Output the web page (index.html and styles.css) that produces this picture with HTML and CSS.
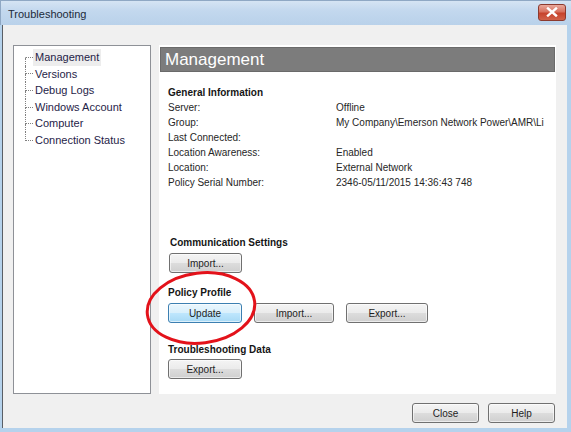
FILE: index.html
```html
<!DOCTYPE html>
<html>
<head>
<meta charset="utf-8">
<link rel="stylesheet" href="styles.css">
</head>
<body>
<div class="window">
  <div class="titlebar">
    <span class="title">Troubleshooting</span>
    <span class="close-x">
      <svg width="12" height="10" viewBox="0 0 12 10"><path d="M2 1.5 L10 8.5 M10 1.5 L2 8.5" stroke="#fff" stroke-width="2.4" stroke-linecap="square"/></svg>
    </span>
  </div>
  <div class="body">
    <div class="panels">
      <div class="tree">
        <ul class="tree-list">
          <li class="first"><span class="branch"><span class="b-top"></span><span class="b-bot"></span></span><span class="label sel">Management</span></li>
          <li><span class="branch"><span class="b-top"></span><span class="b-bot"></span></span><span class="label">Versions</span></li>
          <li><span class="branch"><span class="b-top"></span><span class="b-bot"></span></span><span class="label">Debug Logs</span></li>
          <li><span class="branch"><span class="b-top"></span><span class="b-bot"></span></span><span class="label">Windows Account</span></li>
          <li><span class="branch"><span class="b-top"></span><span class="b-bot"></span></span><span class="label">Computer</span></li>
          <li class="last"><span class="branch"><span class="b-top"></span><span class="b-bot"></span></span><span class="label">Connection Status</span></li>
        </ul>
      </div>
      <div class="content">
        <div class="header">Management</div>
        <div class="inner">
          <div class="section-title">General Information</div>
          <div class="info">
            <span>Server:</span><span>Offline</span>
            <span>Group:</span><span>My Company\Emerson Network Power\AMR\Li</span>
            <span>Last Connected:</span><span></span>
            <span>Location Awareness:</span><span>Enabled</span>
            <span>Location:</span><span>External Network</span>
            <span>Policy Serial Number:</span><span>2346-05/11/2015 14:36:43 748</span>
          </div>
          <div class="section-title comm">Communication Settings</div>
          <div class="btn-row r1"><button class="btn w73">Import...</button></div>
          <div class="section-title pp">Policy Profile</div>
          <div class="btn-row r2">
            <button class="btn hot w74">Update</button>
            <button class="btn w80">Import...</button>
            <button class="btn w82">Export...</button>
          </div>
          <div class="section-title td">Troubleshooting Data</div>
          <div class="btn-row r3"><button class="btn w74">Export...</button></div>
        </div>
      </div>
    </div>
    <div class="footer">
      <button class="btn fbtn">Close</button>
      <button class="btn fbtn">Help</button>
    </div>
  </div>
  <svg class="annot" width="120" height="84" viewBox="0 0 120 84">
    <ellipse cx="60" cy="42" rx="54" ry="35" fill="none" stroke="#e3121a" stroke-width="3" transform="rotate(-7 60 42)"/>
  </svg>
</div>
</body>
</html>
```

FILE: styles.css
```css
* { box-sizing: border-box; }
html, body { margin: 0; padding: 0; }
body {
  width: 571px;
  height: 432px;
  overflow: hidden;
  font-family: "Liberation Sans", Arial, sans-serif;
  background: #fff;
}
.window {
  position: relative;
  width: 571px;
  height: 432px;
  background: #b5d2ec;
  display: flex;
  flex-direction: column;
}
.titlebar {
  height: 25px;
  flex: none;
  background: linear-gradient(#d5e4f3 0%, #c3d8ee 40%, #b9d1ea 100%);
  border-top: 1px solid #8fa8c4;
  border-left: 1px solid #8fa8c4;
  display: flex;
  align-items: center;
  justify-content: space-between;
  padding: 0 5px 0 7px;
}
.title {
  font-size: 11px;
  color: #1c2a3a;
  margin-top: 2px;
}
.close-x {
  width: 28px;
  height: 17px;
  margin-top: -2px;
  border: 1px solid #8c3a2e;
  border-radius: 3px;
  background: linear-gradient(#e9a99c 0%, #d7715f 45%, #c7432c 55%, #d0624a 100%);
  display: flex;
  align-items: center;
  justify-content: center;
}
.close-x svg { display: block; }
.body {
  flex: 1;
  margin: 0 4px 4px 2px;
  background: #f0f0f0;
  border-left: 1px solid #5a5f66;
  padding: 20px 11px 5px 10px;
  display: flex;
  flex-direction: column;
}
.panels {
  display: flex;
  gap: 8px;
  height: 349px;
}
.tree {
  width: 138px;
  background: #fff;
  border: 1px solid #8e9197;
  padding-top: 3px;
}
.tree-list {
  list-style: none;
  margin: 0;
  padding: 0 0 0 11px;
}
.tree-list li {
  display: flex;
  align-items: stretch;
  height: 16.6px;
}
.branch {
  width: 8px;
  flex: none;
  display: flex;
  flex-direction: column;
}
.b-top {
  flex: 1;
  border-left: 1px dotted #808080;
  border-bottom: 1px dotted #808080;
}
.b-bot {
  flex: 1;
  border-left: 1px dotted #808080;
}
.first .b-top { border-left-color: transparent; }
.last .b-bot { border-left-color: transparent; }
.label {
  font-size: 11px;
  line-height: 16.6px;
  color: #1f2348;
  padding-left: 2px;
  padding-right: 2px;
}
.label.sel { background: #ededed; }
.content {
  flex: 1;
  background: #fff;
  padding: 2px 1px 0 1px;
  display: flex;
  flex-direction: column;
}
.header {
  height: 25px;
  background: #7c7c7c;
  border: 1px solid #6a6a6a;
  color: #fff;
  font-size: 17px;
  line-height: 23px;
  padding-left: 4px;
}
.inner {
  padding: 13px 10px 0 8px;
  overflow: hidden;
}
.section-title {
  font-size: 10px;
  font-weight: bold;
  line-height: 15px;
  color: #151515;
}
.info {
  display: grid;
  grid-template-columns: 168px 1fr;
  font-size: 10px;
  line-height: 15px;
  color: #262626;
  white-space: nowrap;
}
.info span { overflow: hidden; }
.section-title.comm { margin-top: 45px; padding-left: 2px; }
.section-title.pp { margin-top: 12px; }
.section-title.td { margin-top: 19px; }
.btn-row { display: flex; }
.btn-row.r1 { margin-top: 3px; padding-left: 1px; }
.btn-row.r2 { margin-top: 3px; gap: 12px; }
.btn-row.r3 { margin-top: 2px; }
.btn {
  height: 20px;
  font-family: "Liberation Sans", Arial, sans-serif;
  font-size: 10px;
  color: #1e1e1e;
  border: 1px solid #707070;
  border-radius: 3px;
  background: linear-gradient(#f4f4f4 0%, #ebebeb 48%, #dcdcdc 52%, #cfcfcf 100%);
  box-shadow: inset 0 0 0 1px rgba(255,255,255,0.6);
  padding: 0;
}
.btn.hot {
  border-color: #3c7fb1;
  background: linear-gradient(#eaf6fd 0%, #d9f0fc 48%, #bee6fd 52%, #a7d9f5 100%);
}
.w73 { width: 73px; }
.w74 { width: 74px; }
.w80 { width: 80px; }
.w82 { width: 82px; }
.footer {
  display: flex;
  justify-content: flex-end;
  gap: 9px;
  margin-top: 9px;
  padding-right: 1px;
}
.fbtn { width: 67px; }
.annot {
  position: absolute;
  left: 141px;
  top: 266px;
}
```
